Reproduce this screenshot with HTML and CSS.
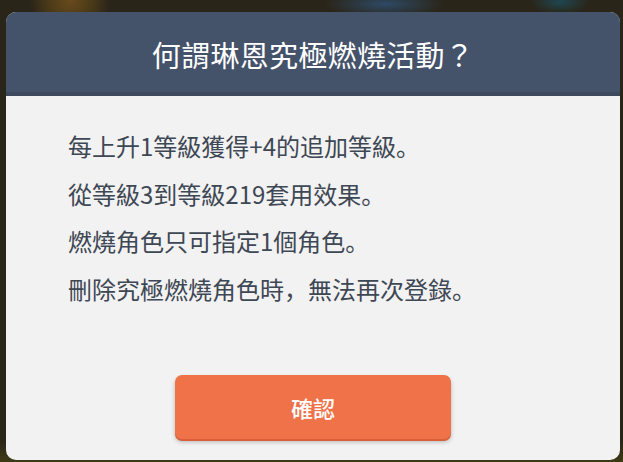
FILE: index.html
```html
<!DOCTYPE html>
<html lang="zh-Hans">
<head>
<meta charset="utf-8">
<title>何謂琳恩究極燃燒活動？</title>
<link rel="stylesheet" href="styles.css">
</head>
<body>
<div class="scene">
  <div class="dialog">
    <div class="dialog-header">
      <h1 class="dialog-title" lang="zh-Hant">何謂琳恩究極燃燒活動？</h1>
    </div>
    <div class="dialog-body">
      <ul class="rules">
        <li>每上升1等級獲得+4的追加等級。</li>
        <li>從等級3到等級219套用效果。</li>
        <li>燃燒角色只可指定1個角色。</li>
        <li>刪除究極燃燒角色時，無法再次登錄。</li>
      </ul>
      <div class="actions">
        <button class="btn-confirm" type="button">確認</button>
      </div>
    </div>
  </div>
</div>
</body>
</html>
```

FILE: styles.css
```css
html, body {
  margin: 0;
  padding: 0;
}

body {
  width: 623px;
  height: 462px;
  overflow: hidden;
  font-family: "Noto Sans CJK SC", "Noto Sans", sans-serif;
  background:
    radial-gradient(circle at 70px 0px, #6a4a1c 0, #4a3a18 22px, rgba(0,0,0,0) 40px),
    radial-gradient(ellipse 60px 14px at 385px 4px, #2e4a66 0, rgba(0,0,0,0) 100%),
    radial-gradient(ellipse 30px 12px at 560px 2px, #1f4650 0, rgba(0,0,0,0) 100%),
    linear-gradient(to bottom, #2a2519 0, #2a2519 440px, #3d3a14 462px),
    #2a2519;
}

.scene {
  box-sizing: border-box;
  width: 623px;
  height: 462px;
  padding: 12px 3px 2px 6px;
  display: flex;
}

.dialog {
  flex: 1;
  display: flex;
  flex-direction: column;
  border-radius: 10px;
  overflow: hidden;
  background: #f2f2f2;
}

.dialog-header {
  height: 80px;
  background: #44526a;
  border-bottom: 4px solid #3d495d;
  display: flex;
  align-items: center;
  justify-content: center;
}

.dialog-title {
  margin: 0;
  padding-top: 5px;
  font-family: "Noto Sans CJK TC", "Noto Sans", sans-serif;
  font-size: 29px;
  font-weight: 400;
  letter-spacing: 0.3px;
  color: #ffffff;
  line-height: 1;
}

.dialog-body {
  flex: 1;
  display: flex;
  flex-direction: column;
  padding: 26px 0 21px 62px;
}

.rules {
  list-style: none;
  margin: 0;
  padding: 0;
}

.rules li {
  font-size: 24px;
  line-height: 47.5px;
  color: #3e4754;
}

.actions {
  margin-top: auto;
  display: flex;
  justify-content: center;
  padding-right: 62px;
}

.btn-confirm {
  width: 276px;
  height: 64px;
  border: none;
  border-radius: 7px;
  background: #ef7249;
  box-shadow: 0 2px 0 #d85f3a, 0 3px 4px rgba(0,0,0,0.25);
  color: #ffffff;
  font-family: "Noto Sans CJK SC", "Noto Sans", sans-serif;
  font-size: 22px;
  font-weight: 500;
  padding: 0;
}
```
